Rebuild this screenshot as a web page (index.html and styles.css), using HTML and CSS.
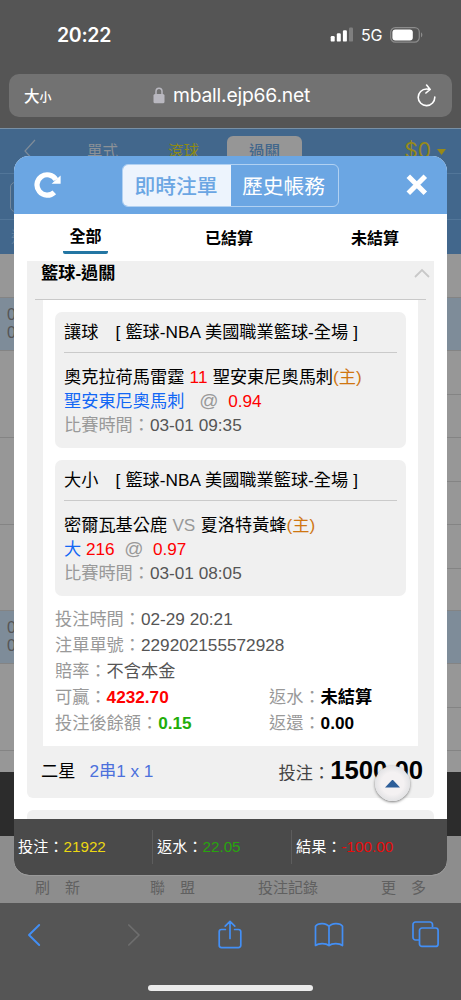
FILE: index.html
```
<!DOCTYPE html>
<html lang="zh-Hant">
<head>
<meta charset="utf-8">
<meta name="viewport" content="width=device-width, initial-scale=1">
<title>即時注單</title>
<link rel="stylesheet" href="styles.css">
</head>
<body>
<div class="phone">
  <header class="status">
    <span class="clock">20:22</span>
    <svg class="signal" width="24" height="16" viewBox="0 0 24 16"><g fill="#fff"><rect x="0.7" y="9" width="4" height="5.6" rx="1.2"/><rect x="6.8" y="6.3" width="4" height="8.3" rx="1.2"/><rect x="12.9" y="3.3" width="4" height="11.3" rx="1.2"/><rect x="19" y="0.6" width="4" height="14" rx="1.2" opacity=".25"/></g></svg>
    <span class="network">5G</span>
    <svg class="battery" width="34" height="16" viewBox="0 0 34 16"><rect x=".7" y=".7" width="28.6" height="14.4" rx="4.6" fill="none" stroke="#8c8c8c" stroke-width="1.2"/><rect x="2.4" y="2.4" width="20.4" height="11" rx="3" fill="#fff"/><path d="M31 5.5c1.8.7 1.8 4 0 4.8z" fill="#8c8c8c"/></svg>
  </header>

  <div class="address">
    <span class="aa">大<small>小</small></span>
    <span class="host">
      <svg width="12" height="17" viewBox="0 0 12 17"><path d="M3 8V4.6C3 2.6 4.1 1.2 6 1.2s3 1.4 3 3.4V8" fill="none" stroke="#b9b8c0" stroke-width="1.5"/><rect x=".5" y="7" width="11" height="9.3" rx="1.6" fill="#b9b8c0"/></svg>
      mball.ejp66.net
    </span>
    <svg class="reload" width="22" height="24" viewBox="0 0 22 24"><path d="M15 5.400C13.500 5 12.500 5 11.500 5a8.300 8.300 0 1 0 8.300 8M11.600 1l3.600 4.400-4.300 3.600" fill="none" stroke="#fff" stroke-width="1.600" stroke-linecap="round" stroke-linejoin="round"/></svg>
  </div>

  <main class="site">
    <nav class="site-nav">
      <svg class="site-back" width="14" height="24" viewBox="0 0 14 24"><path d="M12 1 2 12l10 11" fill="none" stroke="#7f8c99" stroke-width="1.2"/></svg>
      <span class="site-link">單式</span>
      <span class="site-link live">滾球</span>
      <span class="site-link current">過關</span>
      <span class="money">$0<i></i></span>
    </nav>
    <div class="site-bar first"><span class="chip"></span><span class="mark">⋮</span></div>
    <div class="site-bar second"><span>進</span></div>
    <div class="odds-row r44"></div>
    <div class="odds-row hot r53">0<br>0</div>
    <div class="odds-row split r87"></div>
    <div class="odds-row split r87"></div>
    <div class="odds-row split r86"></div>
    <div class="odds-row hot r53">0<br>0</div>
    <div class="odds-row split r87"></div>
    <div class="odds-row r21"></div>
    <div class="dark-strip"></div>
    <nav class="site-footer"><span>刷　新</span><span>聯　盟</span><span>投注記錄</span><span>更　多</span></nav>

    <section class="modal">
      <header class="modal-head">
        <svg class="refresh" width="27" height="27" viewBox="0 0 27 27"><path d="M20.300 20.300A10.200 10.200 0 1 1 22 7.800" fill="none" stroke="#fff" stroke-width="5.200"/><path d="M26.600 3.400v8.400h-9z" fill="#fff"/></svg>
        <div class="segment"><span class="on">即時注單</span><span>歷史帳務</span></div>
        <svg class="close" width="22" height="22" viewBox="0 0 22 22"><path d="M2.3 2.3l17 17M19.3 2.3l-17 17" stroke="#fff" stroke-width="5"/></svg>
      </header>
      <nav class="filters"><span class="active">全部</span><span>已結算</span><span>未結算</span></nav>

      <div class="scroll">
        <article class="group">
          <h2>籃球-過關<svg width="16" height="10" viewBox="0 0 16 10"><path d="M1 9l7-7 7 7" fill="none" stroke="#c8c8c8" stroke-width="1.8"/></svg></h2>
          <div class="ticket">
            <div class="bet">
              <h3>讓球　[ 籃球-NBA 美國職業籃球-全場 ]</h3>
              <p class="teams">奧克拉荷馬雷霆 <b class="red">11</b> 聖安東尼奧馬刺<b class="home">(主)</b></p>
              <p class="pick"><b class="blue">聖安東尼奧馬刺</b><b class="at wide">@</b><b class="red">0.94</b></p>
              <p class="time"><b class="label">比賽時間：</b>03-01 09:35</p>
            </div>
            <div class="bet">
              <h3>大小　[ 籃球-NBA 美國職業籃球-全場 ]</h3>
              <p class="teams">密爾瓦基公鹿 <b class="label">VS</b> 夏洛特黃蜂<b class="home">(主)</b></p>
              <p class="pick"><b class="blue">大</b> <b class="red">216</b><b class="at">@</b><b class="red">0.97</b></p>
              <p class="time"><b class="label">比賽時間：</b>03-01 08:05</p>
            </div>
            <div class="info">
              <p><b class="label">投注時間：</b>02-29 20:21</p>
              <p><b class="label">注單單號：</b>229202155572928</p>
              <p><b class="label">賠率：</b>不含本金</p>
              <div class="pair"><p><b class="label">可贏：</b><strong class="red">4232.70</strong></p><p><b class="label">返水：</b><strong>未結算</strong></p></div>
              <div class="pair"><p><b class="label">投注後餘額：</b><strong class="green">0.15</strong></p><p><b class="label">返還：</b><strong>0.00</strong></p></div>
            </div>
          </div>
          <div class="total"><span>二星</span><span class="combo">2串1 x 1</span><span class="stake">投注：<strong>1500.00</strong></span></div>
        </article>
        <article class="group next"></article>
      </div>

      <footer class="sums">
        <span>投注：<b class="yellow">21922</b></span>
        <span>返水：<b class="green-dim">22.05</b></span>
        <span>結果：<b class="red-dim">-100.00</b></span>
      </footer>
      <div class="to-top"><i></i></div>
    </section>
  </main>

  <footer class="toolbar">
    <div class="tools">
      <svg width="14" height="24" viewBox="0 0 14 24"><path d="M12.2 2 2 12l10.200 10" fill="none" stroke="#438ff5" stroke-width="1.9" stroke-linecap="round" stroke-linejoin="round"/></svg>
      <svg width="14" height="24" viewBox="0 0 14 24"><path d="M1.800 2 12 12 1.800 22" fill="none" stroke="#6e6e6e" stroke-width="1.7" stroke-linecap="round" stroke-linejoin="round"/></svg>
      <svg width="24" height="30" viewBox="0 0 24 30"><path d="M7.400 9.500H3.500A2.300 2.300 0 0 0 1.200 11.800v13.500a2.300 2.300 0 0 0 2.300 2.300h17a2.300 2.300 0 0 0 2.300-2.300V11.800a2.300 2.300 0 0 0-2.300-2.300h-3.900M12 18.500V1.500M7.200 6.100 12 1.300l4.800 4.800" fill="none" stroke="#438ff5" stroke-width="1.700" stroke-linecap="round" stroke-linejoin="round"/></svg>
      <svg width="30" height="26" viewBox="0 0 30 26"><path d="M15 4.500C12.500.800 4 .500 1.500 4.300V23.500c3-2.500 10.500-2.500 13.500 0 3-2.500 10.500-2.500 13.500 0V4.300C26 .5 17.500.8 15 4.500zV23.500" fill="none" stroke="#438ff5" stroke-width="1.700" stroke-linejoin="round"/></svg>
      <svg width="28" height="27" viewBox="0 0 28 27"><path d="M20.500 6V3.500A2.500 2.500 0 0 0 18 1H3.500A2.500 2.500 0 0 0 1 3.500v13A2.500 2.500 0 0 0 3.500 19H7" fill="none" stroke="#438ff5" stroke-width="1.700"/><rect x="7.500" y="7" width="18.600" height="18.400" rx="2.500" fill="none" stroke="#438ff5" stroke-width="1.700"/></svg>
    </div>
    <div class="home-line"></div>
  </footer>
</div>
</body>
</html>
```
FILE: styles.css
```
* { box-sizing: border-box; }
body { margin: 0; }
h2, h3, p { margin: 0; font-size: inherit; font-weight: 400; }
b { font-weight: 400; }
i { font-style: normal; }
svg { display: block; flex: none; }

.phone {
  width: 461px;
  height: 1000px;
  overflow: hidden;
  display: flex;
  flex-direction: column;
  background: #555;
  color: #000;
  font-family: "Liberation Sans", "Noto Sans CJK TC", sans-serif;
  font-size: 17.2px;
  white-space: nowrap;
}

/* status bar and address field */
.status { height: 74px; padding: 4px 37px 8px 57px; display: flex; align-items: center; color: #fff; font-family: Inter, sans-serif; }
.clock { font-size: 19.500px; font-weight: 600; letter-spacing: -.3px; margin-right: auto; }
.signal { margin-right: 7px; }
.network { font-size: 16px; font-weight: 400; width: 29px; letter-spacing: -.2px; }
.address { height: 43px; margin: 0 9px 11px; padding: 0 15px; border-radius: 10px; background: #727272; color: #fff; display: flex; align-items: center; }
.aa { width: 129px; font: 500 15.500px/43px "Noto Sans CJK TC", sans-serif; }
.aa small { font-size: 12px; }
.host { display: flex; align-items: center; gap: 8px; font: 400 19.300px/43px Inter, sans-serif; letter-spacing: -.2px; }
.reload { margin-left: auto; }

/* dimmed page behind the dialog */
.site { position: relative; height: 774px; background: #979797; border-top: 1px solid #7890a6; }
.site-nav { height: 45px; padding: 0 15px 0 23px; display: flex; background: #42678c; border-bottom: 1px solid #527699; }
.site-back { margin-top: 10px; }
.site-link { width: 75px; height: 36px; margin: 7px 0 0 6px; font-size: 15.500px; line-height: 32px; text-align: center; color: #8b9197; }
.site-back + .site-link { margin-left: 28px; }
.site-nav .live { color: #8e8a16; }
.site-nav .current { border-radius: 6px 6px 0 0; background: #969696; color: #42678c; font-weight: 500; }
.money { margin-left: auto; display: flex; gap: 6px; font: 21px/43px Inter, sans-serif; color: #978919; }
.money i { margin-top: 20px; width: 9px; height: 6px; background: #978919; clip-path: polygon(0 0, 100% 0, 50% 100%); }
.site-bar { background: #42678c; display: flex; justify-content: space-between; }
.first { height: 46px; padding: 8px 9px 0 10px; border-bottom: 1px solid #527699; }
.chip { width: 30px; height: 30px; border: 1px solid #74899e; border-radius: 5px; }
.mark { font-size: 17px; color: #74899e; }
.second { height: 34px; padding: 5px 0 0 11px; font-size: 15px; color: #617f9d; }
.odds-row { padding: 8px 7px; line-height: 17.500px; font-size: 16px; color: #555; border-bottom: 1px solid #848484; }
.hot { background: #7e8c99; }
.split { background: linear-gradient(90deg, transparent 50%, #848484 50%) 0 43px / 100% 1px no-repeat; }
.r44 { height: 44px; }
.r53 { height: 53px; }
.r86 { height: 86px; }
.r87 { height: 87px; }
.r21 { height: 21px; border: 0; }
.dark-strip { height: 64px; background: #2c2c2c; }
.site-footer { height: 67px; padding: 41px 0 0 35px; display: grid; grid-template-columns: 115px 108px 123px 1fr; background: #8d8d8d; font-size: 15px; line-height: 22px; color: #606060; }

/* dialog */
.modal { position: absolute; left: 14px; top: 27px; width: 433px; height: 719px; display: flex; flex-direction: column; border-radius: 15px; overflow: hidden; background: #fff; box-shadow: 0 1px 0 #9a9a9a; }
.modal-head { height: 58px; padding: 0 20px; display: flex; align-items: center; background: #6ba6e3; }
.segment { width: 217px; height: 43px; margin: 0 auto 0 61px; display: flex; border: 1px solid #b1d1f2; border-radius: 6px; overflow: hidden; color: #fff; font-size: 20.800px; line-height: 43px; }
.segment span { flex: 1; text-align: center; }
.segment .on { flex: none; width: 108px; padding-right: 2px; background: #edf4fd; color: #6ba6e3; font-weight: 500; }
.segment .on + span { padding-right: 2px; }
.close { margin-right: -1px; }
.filters { height: 47px; padding: 8px 48px 0 49px; display: flex; font-size: 16px; font-weight: 700; line-height: 33px; }
.filters .active { width: 45px; height: 32px; line-height: 29px; text-align: center; border-bottom: 3.500px solid #2376a3; border-radius: 2px; }
.filters span:nth-child(2) { margin: 0 auto 0 97px; }
.scroll { height: 558px; padding: 0 13px; overflow: hidden; }
.group { height: 537px; padding: 0 8px; background: #f0f0f0; border-radius: 0 0 6px 6px; }
.group.next { margin-top: 12px; border-radius: 6px; }
.group h2 { height: 39px; padding: 0 0 0 6px; display: flex; justify-content: space-between; line-height: 24px; font-weight: 700; border-bottom: 1px solid #c9c9c9; }
h2 svg { margin: 7px -4px 0 0; }
.ticket { height: 446px; margin: 0 8px; padding: 12px 12px 0; background: #fff; }
.bet { height: 136px; margin-bottom: 12px; padding: 0 9px; background: #f0f0f0; border-radius: 7px; }
h3 { height: 41px; margin-bottom: 12px; line-height: 40px; word-spacing: .3px; border-bottom: 1px solid #cacaca; }
.bet p { height: 24px; line-height: 24px; }
.teams { word-spacing: .5px; }
.red { color: #f00; }
.blue { color: #1267f5; }
.home { color: #cf7610; }
.label { color: #999; }
.at { color: #999; display: inline-block; margin: 0 9.500px; font-size: 19px; line-height: 20px; }
.wide { margin-left: 15px; }
.time, .info { color: #555; }
.info { margin-top: -2px; }
.info p { height: 26px; line-height: 26px; }
.info strong { color: #000; }
.info .red { color: #f00; }
.info .green { color: #21ad09; }
.pair { display: grid; grid-template-columns: 214px 1fr; }
.total { height: 51px; padding: 0 3px 0 6px; display: flex; line-height: 51px; }
.combo { margin-left: 14px; color: #4c70dc; }
.stake { margin-left: auto; color: #444; }
.stake strong { color: #000; font-size: 25.700px; line-height: 48px; }
.sums { height: 56px; padding: 11px 0; display: grid; grid-template-columns: 138px 139px 1fr; background: #4a4a4a; color: #fff; font-size: 15.200px; line-height: 33px; }
.sums span { padding-left: 4px; }
.sums span + span { border-left: 1px solid #5d5d5d; }
.yellow { color: #ecd812; }
.green-dim { color: #27a50d; }
.red-dim { color: #e80c0c; }
.to-top { position: absolute; left: 361px; top: 610px; width: 35px; height: 35px; display: grid; place-items: center; border-radius: 50%; background: radial-gradient(#f4f1f2 45%, #e3e3e5 70%); box-shadow: 0 1px 3px #777; }
.to-top i { width: 15px; height: 8px; background: #2d5e99; clip-path: polygon(50% 0, 100% 100%, 0 100%); }

/* browser toolbar */
.toolbar { flex: 1; display: flex; flex-direction: column; align-items: center; border-top: 1px solid #646464; }
.tools { width: 100%; height: 82px; padding: 0 0 19px 27px; display: grid; grid-template-columns: 100px 91px 96px 98px 1fr; align-items: center; }
.home-line { width: 165px; height: 6px; border-radius: 3px; background: #ebebeb; }
```
